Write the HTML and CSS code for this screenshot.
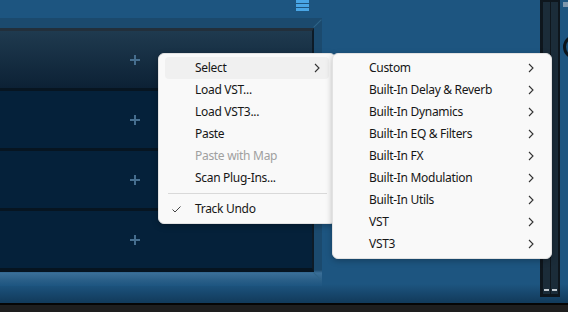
FILE: index.html
```html
<!DOCTYPE html>
<html>

<head>
  <meta charset="UTF-8" />
  <title>Rack Menu</title>
  <link rel="stylesheet" href="styles.css">
</head>

<body>
  <div class="app">
    <div class="workspace">
      <div class="topbar">
        <span class="burger"><i></i><i></i><i></i></span>
      </div>
      <div class="rack">
        <div class="rack-inner">
          <div class="slot first"><span class="plus"></span></div>
          <div class="slot"><span class="plus"></span></div>
          <div class="slot"><span class="plus"></span></div>
          <div class="slot"><span class="plus"></span></div>
        </div>
      </div>
    </div>

    <div class="meter">
      <div class="meter-col"><span class="peak"></span></div>
      <div class="meter-col"><span class="peak"></span></div>
    </div>

    <div class="side">
      <span class="side-btn"></span>
      <span class="knob"></span>
    </div>
  </div>
  <div class="statusbar"></div>

  <!-- context menu -->
  <div class="menu main-menu">
    <div class="item active">Select
      <svg class="chev" viewBox="0 0 6 10"><path d="M1 1 L5 5 L1 9" /></svg>
    </div>
    <div class="item">Load VST...</div>
    <div class="item">Load VST3...</div>
    <div class="item">Paste</div>
    <div class="item disabled">Paste with Map</div>
    <div class="item">Scan Plug-Ins...</div>
    <div class="sep"></div>
    <div class="item">
      <svg class="check" viewBox="0 0 9 7"><path d="M0.5 3.5 L3 6 L8.5 0.5" /></svg>
      Track Undo
    </div>
  </div>

  <div class="menu sub-menu">
    <div class="item">Custom <svg class="chev" viewBox="0 0 6 10"><path d="M1 1 L5 5 L1 9" /></svg></div>
    <div class="item">Built-In Delay &amp; Reverb <svg class="chev" viewBox="0 0 6 10"><path d="M1 1 L5 5 L1 9" /></svg></div>
    <div class="item">Built-In Dynamics <svg class="chev" viewBox="0 0 6 10"><path d="M1 1 L5 5 L1 9" /></svg></div>
    <div class="item">Built-In EQ &amp; Filters <svg class="chev" viewBox="0 0 6 10"><path d="M1 1 L5 5 L1 9" /></svg></div>
    <div class="item">Built-In FX <svg class="chev" viewBox="0 0 6 10"><path d="M1 1 L5 5 L1 9" /></svg></div>
    <div class="item">Built-In Modulation <svg class="chev" viewBox="0 0 6 10"><path d="M1 1 L5 5 L1 9" /></svg></div>
    <div class="item">Built-In Utils <svg class="chev" viewBox="0 0 6 10"><path d="M1 1 L5 5 L1 9" /></svg></div>
    <div class="item">VST <svg class="chev" viewBox="0 0 6 10"><path d="M1 1 L5 5 L1 9" /></svg></div>
    <div class="item">VST3 <svg class="chev" viewBox="0 0 6 10"><path d="M1 1 L5 5 L1 9" /></svg></div>
  </div>
</body>

</html>
```

FILE: styles.css
```css
/* Reset default margin and padding */
* {
  margin: 0;
  padding: 0;
  box-sizing: border-box;
}

body {
  width: 568px;
  height: 312px;
  overflow: hidden;
  position: relative;
  background-color: #1e1e1e;
}

/* Main window area */
.app {
  display: flex;
  height: 305px;
  background: linear-gradient(#1d5580 0, #1d5580 284px, #123b5c 302px);
  border-bottom: 2px solid #050505;
}

.workspace {
  width: 540px;
}

.topbar {
  height: 18px;
  padding-left: 296px;
}

.burger {
  display: flex;
  flex-direction: column;
  gap: 1px;
  width: 13px;
}

.burger i {
  display: block;
  height: 3px;
  background-color: #49a6e6;
}

/* Rack frame with bevel */
.rack {
  position: relative;
  width: 322px;
  height: 268px;
  padding: 10px 8px 14px 0;
  background: linear-gradient(#1b4a6e 0, #1b4a6e 252px, #3a6f98 255px, #2a5f88 262px, #1d5580 268px);
}

/* bevel corner highlights */
.rack::before,
.rack::after {
  content: "";
  position: absolute;
  right: -1px;
  width: 11px;
  height: 1px;
  background-color: #2f6488;
}

.rack::before {
  top: 5px;
  transform: rotate(-45deg);
}

.rack::after {
  top: 258px;
  transform: rotate(45deg);
}

.rack-inner {
  display: grid;
  grid-template-rows: repeat(4, 57px);
  gap: 3px;
  background-color: #071521;
  border-top: 3px solid #222f3b;
  border-right: 2px solid #0d1b27;
  border-bottom: 4px solid #061420;
}

.slot {
  display: flex;
  align-items: center;
  padding-left: 130px;
  background-color: #05213a;
}

.slot.first {
  background: linear-gradient(#1f3a4f, #0c2135);
}

.plus {
  position: relative;
  width: 10px;
  height: 10px;
}

.plus::before,
.plus::after {
  content: "";
  position: absolute;
  background-color: #466e8e;
}

.plus::before {
  left: 4px;
  top: 0;
  width: 2px;
  height: 10px;
}

.plus::after {
  left: 0;
  top: 4px;
  width: 10px;
  height: 2px;
}

/* Level meter */
.meter {
  display: flex;
  gap: 1px;
  width: 20px;
  height: 297px;
  padding: 2px 2px 3px 3px;
  background-color: #0e161d;
}

.meter-col {
  flex: 1;
  display: flex;
  align-items: flex-end;
  justify-content: center;
  padding-bottom: 3px;
  background-color: #1b2c39;
}

.peak {
  width: 5px;
  height: 2px;
  background-color: #c5ccd2;
}

.side {
  width: 8px;
  padding: 2px 0 0 3px;
  overflow: hidden;
}

.side-btn {
  display: block;
  width: 5px;
  height: 5px;
  background-color: #7d97ad;
}

.knob {
  display: block;
  width: 24px;
  height: 24px;
  margin-top: 28px;
  border: 3px solid #0b141b;
  border-radius: 50%;
}

.statusbar {
  height: 7px;
  background-color: #1e1e1e;
}

/* Context menus */
.menu {
  position: absolute;
  top: 53px;
  padding: 3px 6px;
  background-color: #f9f9f9;
  border: 1px solid #e2e2e2;
  border-radius: 6px;
  box-shadow: 0 2px 6px rgba(0, 0, 0, 0.25);
  font-family: "Noto Sans", sans-serif;
  font-size: 12px;
  letter-spacing: -0.3px;
  color: #161616;
}

.main-menu {
  left: 158px;
  width: 178px;
}

.sub-menu {
  left: 332px;
  width: 220px;
  padding: 3px 6px 3px 4px;
}

.item {
  position: relative;
  height: 22px;
  line-height: 22px;
  padding-left: 30px;
  border-radius: 4px;
  white-space: nowrap;
}

.sub-menu .item {
  padding-left: 32px;
}

.item.active {
  background-color: #f0f0f0;
}

.item.disabled {
  color: #a0a0a0;
}

.chev {
  position: absolute;
  right: 9px;
  top: 6px;
  width: 6px;
  height: 10px;
  fill: none;
  stroke: #333;
  stroke-width: 1.1;
}

.sub-menu .chev {
  right: 11px;
}

.check {
  position: absolute;
  left: 7px;
  top: 8px;
  width: 9px;
  height: 7px;
  fill: none;
  stroke: #444;
  stroke-width: 1;
}

.sep {
  height: 1px;
  margin: 4px 2px 4px 3px;
  background-color: #d9d9d9;
}
```
